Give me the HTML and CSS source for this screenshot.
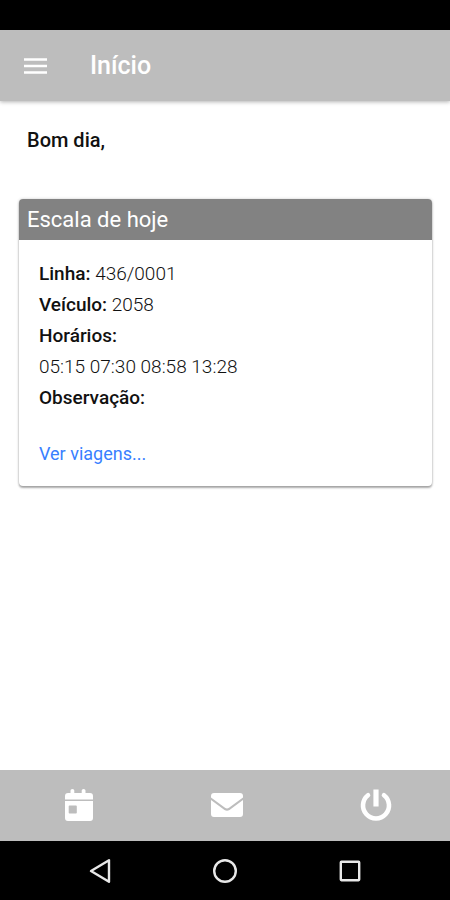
FILE: index.html
```html
<!DOCTYPE html>
<html lang="pt-BR">
<head>
<meta charset="utf-8">
<meta name="viewport" content="width=device-width, initial-scale=1">
<title>Início</title>
<link rel="stylesheet" href="styles.css">
</head>
<body>
<div class="status-bar"></div>
<header class="toolbar">
  <button class="icon-button" type="button" aria-label="Menu">
    <svg width="23" height="18" viewBox="0 0 23 18"><path d="M0 2.500h23M0 9h23M0 15.500h23" stroke="#fff" stroke-width="2.4"/></svg>
  </button>
  <h1 class="title">Início</h1>
</header>
<main class="content">
  <p class="greeting">Bom dia,</p>
  <section class="card">
    <h2 class="card-header">Escala de hoje</h2>
    <div class="card-body">
      <p><b>Linha:</b> 436/0001</p>
      <p><b>Veículo:</b> 2058</p>
      <p><b>Horários:</b></p>
      <p>05:15 07:30 08:58 13:28</p>
      <p><b>Observação:</b></p>
      <a class="card-link" href="#viagens">Ver viagens...</a>
    </div>
  </section>
</main>
<nav class="tabs">
  <button class="icon-button" type="button" aria-label="Escala">
    <svg width="30" height="34" viewBox="0 0 30 34"><path fill="#fff" d="M1 11.500V8q0-3 3-3h2.500V2.500q0-1.500 1.900-1.500t1.900 1.500V5h7.400V2.500q0-1.500 1.900-1.500t1.900 1.500V5H26q3 0 3 3v3.500zM1 13h28v17q0 3-3 3H4q-3 0-3-3zM5.500 17.500q-.8 0-.8.800v6.400q0 .8.800.8h6.500q.8 0 .8-.8v-6.400q0-.8-.8-.8z" fill-rule="evenodd"/></svg>
  </button>
  <button class="icon-button" type="button" aria-label="Mensagens">
    <svg width="32" height="26" viewBox="0 0 32 26"><path fill="#fff" d="M0 4q0-3 3-3h26q3 0 3 3v1.500L18 15.800q-2 1.400-4 0L0 5.500zM0 8l13.500 10q2.500 1.600 5 0L32 8v14q0 3-3 3H3q-3 0-3-3z"/></svg>
  </button>
  <button class="icon-button" type="button" aria-label="Sair">
    <svg width="32" height="34" viewBox="0 0 32 34"><path fill="none" stroke="#fff" stroke-width="4.600" stroke-linecap="round" d="M8 7.200a13 13 0 1 0 16 0"/><path fill="none" stroke="#fff" stroke-width="5.200" d="M16 1.500v17"/></svg>
  </button>
</nav>
<footer class="system-nav">
  <button class="icon-button" type="button" aria-label="Voltar">
    <svg width="24" height="26" viewBox="0 0 24 26"><path d="M21 2.200v21.600L3 13z" fill="none" stroke="#e8e8e8" stroke-width="2.400" stroke-linejoin="round"/></svg>
  </button>
  <button class="icon-button" type="button" aria-label="Tela inicial">
    <svg width="26" height="26" viewBox="0 0 26 26"><circle cx="13" cy="13" r="10.800" fill="none" stroke="#e8e8e8" stroke-width="2.400"/></svg>
  </button>
  <button class="icon-button" type="button" aria-label="Recentes">
    <svg width="22" height="22" viewBox="0 0 22 22"><rect x="1.800" y="1.800" width="18.400" height="18.400" rx=".6" fill="none" stroke="#e8e8e8" stroke-width="2.400"/></svg>
  </button>
</footer>
</body>
</html>
```
FILE: styles.css
```css
* {
  box-sizing: border-box;
}

body {
  margin: 0;
  min-height: 100vh;
  display: flex;
  flex-direction: column;
  background: #fff;
  color: #111;
  font: 300 19px/31px Roboto, sans-serif;
}

h1, h2, p {
  margin: 0;
}

.icon-button {
  display: flex;
  align-items: center;
  justify-content: center;
  padding: 0;
  border: 0;
  background: none;
}

.status-bar {
  height: 30px;
  background: #000;
}

.toolbar {
  display: flex;
  align-items: center;
  gap: 43px;
  height: 71px;
  padding: 0 24px;
  background: #bdbdbd;
  box-shadow: 0 1px 4px rgba(0, 0, 0, 0.3);
}

.title {
  color: #fff;
  font-size: 25px;
  font-weight: 500;
}

.content {
  flex: 1;
  padding: 24px 18px 24px 19px;
}

.greeting {
  padding: 0 8px;
  font-size: 20px;
  font-weight: 500;
}

.card {
  margin-top: 43px;
  overflow: hidden;
  border-radius: 4px;
  background: #fff;
  box-shadow: 0 2px 2px rgba(0, 0, 0, 0.3), 0 0 3px rgba(0, 0, 0, 0.22);
}

.card-header {
  padding: 0 8px;
  background: #828282;
  color: #fff;
  font-size: 22px;
  font-weight: 400;
  line-height: 41px;
}

.card-body {
  padding: 18px 20px 17px;
}

.card-body b {
  font-weight: 500;
}

.card-link {
  display: block;
  margin-top: 25px;
  color: #3880ff;
  font-size: 18px;
  font-weight: 400;
  text-decoration: none;
}

.tabs {
  display: grid;
  grid-template-columns: repeat(3, 1fr);
  height: 71px;
  padding-left: 5px;
  padding-bottom: 1px;
  background: #bdbdbd;
}

.system-nav {
  display: grid;
  grid-template-columns: repeat(3, 1fr);
  height: 59px;
  padding: 0 38px;
  background: #000;
}
```
